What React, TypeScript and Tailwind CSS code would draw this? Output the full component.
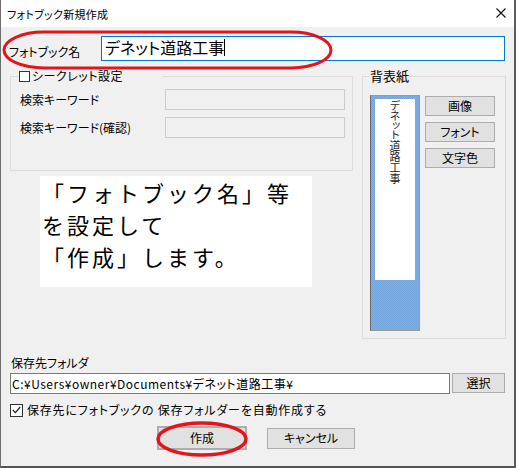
import React from "react";

const jp = "font-['Noto_Sans_CJK_JP',sans-serif] [font-feature-settings:'palt']";

const Btn = ({ children, className = "" }: { children: React.ReactNode; className?: string }) => (
  <div
    className={`flex items-center justify-center bg-[#e1e1e1] border border-[#adadad] text-[12px] leading-none text-black ${className}`}
  >
    {children}
  </div>
);

export default function App() {
  return (
    <div className={`relative w-[518px] h-[468px] bg-white text-black ${jp}`}>
      <div className="flex flex-col w-[516px] h-[468px] border-l border-r-2 border-b-2 border-l-[#6e6e6e] border-r-[#5c5c5c] border-b-[#555555]">
        {/* Title bar */}
        <div className="flex items-center justify-between h-[27px] shrink-0 bg-white pl-[6px] pr-[8px]">
          <span className="text-[11px] leading-[16px] tracking-[0.3px]">フォトブック新規作成</span>
          <svg width="10" height="10" viewBox="0 0 10 10" className="mb-[1px]">
            <path d="M0.5 0.5 L9.5 9.5 M9.5 0.5 L0.5 9.5" stroke="#111" strokeWidth="1.1" />
          </svg>
        </div>

        {/* Body */}
        <div className="flex-1 flex flex-col bg-[#f0f0f0] pl-[9px] pr-[8px]">
          {/* Photobook name */}
          <div className="mt-[9px] flex items-start">
            <span className="w-[92px] pt-[8px] -ml-px text-[12px] leading-[16px]">フォトブック名</span>
            <div className="flex items-center w-[404px] h-[25px] border border-[#0078d7] bg-white pl-[3px] text-[16px] leading-none">
              <span className="-mt-[4px]">デネット道路工事</span>
              <span className="w-px h-[17px] bg-black -mt-[3px]" />
            </div>
          </div>

          {/* Groups */}
          <div className="mt-[7px] flex gap-[9px] items-start">
            <div className="flex flex-col w-[343px]">
              <fieldset className="border border-[#dcdcdc] w-[343px]">
                <legend className="ml-[7px] w-[145px] flex items-center h-[16px] text-[12px] leading-[16px]">
                  <span className="ml-px w-[11px] h-[11px] border border-[#333333] bg-white" />
                  <span className="ml-[2px] tracking-[0.5px]">シークレット設定</span>
                </legend>
                <div className="flex flex-col gap-[7px] pt-[5px] pb-[32px] pl-[9px] pr-[7px]">
                  <div className="flex items-center justify-between">
                    <span className="text-[12px] leading-[16px]">検索キーワード</span>
                    <div className="w-[180px] h-[21px] border border-[#cccccc] bg-[#f0f0f0]" />
                  </div>
                  <div className="flex items-center justify-between">
                    <span className="text-[12px] leading-[16px]">検索キーワード(確認)</span>
                    <div className="w-[180px] h-[21px] border border-[#cccccc] bg-[#f0f0f0]" />
                  </div>
                </div>
              </fieldset>

              {/* Annotation */}
              <div className="mt-[5px] ml-[30px] w-[272px] h-[111px] bg-white pl-[2px] text-[22px] leading-[32px] tracking-[3px] [font-feature-settings:normal]">
                <div>「フォトブック名」等</div>
                <div>を設定して</div>
                <div>「作成」します。</div>
              </div>
            </div>

            <fieldset className="border border-[#dcdcdc] w-[144px]">
              <legend className="ml-[7px] h-[16px] text-[13px] leading-[16px]">背表紙</legend>
              <div className="flex pt-[11px] pb-[7px] pl-[7px]">
                <div className="w-[50px] h-[236px] border border-[#9a9a9a] border-l-[#6a6a6a] bg-[#7aa7dc] bg-[repeating-conic-gradient(#72a2da_0_25%,#86b1e3_0_50%)] bg-[length:2px_2px] pt-[3px] pl-[4px]">
                  <div className="w-[40px] h-[181px] bg-white flex justify-center">
                    <span className="[writing-mode:vertical-rl] [font-feature-settings:'vpal'] text-[11px] leading-[12px] pt-[1px] text-[#222222]">
                      デネット道路工事
                    </span>
                  </div>
                </div>
                <div className="ml-[5px] mt-[1px] flex flex-col gap-[6px]">
                  <Btn className="w-[70px] h-[20px]">画像</Btn>
                  <Btn className="w-[70px] h-[20px]">フォント</Btn>
                  <Btn className="w-[70px] h-[20px]">文字色</Btn>
                </div>
              </div>
            </fieldset>
          </div>

          {/* Save folder */}
          <span className="mt-[16px] ml-px text-[12px] leading-[16px]">保存先フォルダ</span>
          <div className="mt-[2px] flex items-start gap-[2px]">
            <div className="flex items-center w-[440px] h-[21px] border border-[#7a7a7a] bg-white pl-[1px] text-[12px] leading-none tracking-[0.5px]">
              C:¥Users¥owner¥Documents¥デネット道路工事¥
            </div>
            <Btn className="w-[53px] h-[20px]">選択</Btn>
          </div>

          <div className="mt-[8px] flex items-center h-[16px]">
            <span className="flex items-center justify-center w-[13px] h-[13px] border border-[#333333] bg-white">
              <svg width="9" height="8" viewBox="0 0 9 8">
                <path d="M0.8 4 L3.4 6.6 L8.2 1" fill="none" stroke="#222" strokeWidth="1.2" />
              </svg>
            </span>
            <span className="ml-[4px] text-[12px] leading-[16px] tracking-[0.8px]">保存先にフォトブックの 保存フォルダーを自動作成する</span>
          </div>

          <div className="mt-[8px] flex items-center">
            <Btn className="ml-[147px] w-[90px] h-[24px] border-2 border-[#0078d7]">作成</Btn>
            <Btn className="ml-[20px] w-[88px] h-[21px]">キャンセル</Btn>
          </div>
        </div>
      </div>

      {/* red annotation marks */}
      <svg className="absolute inset-0 pointer-events-none" width="518" height="468" viewBox="0 0 518 468">
        <rect x="4" y="32" width="327" height="36" rx="40" ry="18" fill="none" stroke="#e3141b" strokeWidth="3" />
        <ellipse cx="202" cy="439" rx="44" ry="16" fill="none" stroke="#e3141b" strokeWidth="3.5" />
      </svg>
    </div>
  );
}
